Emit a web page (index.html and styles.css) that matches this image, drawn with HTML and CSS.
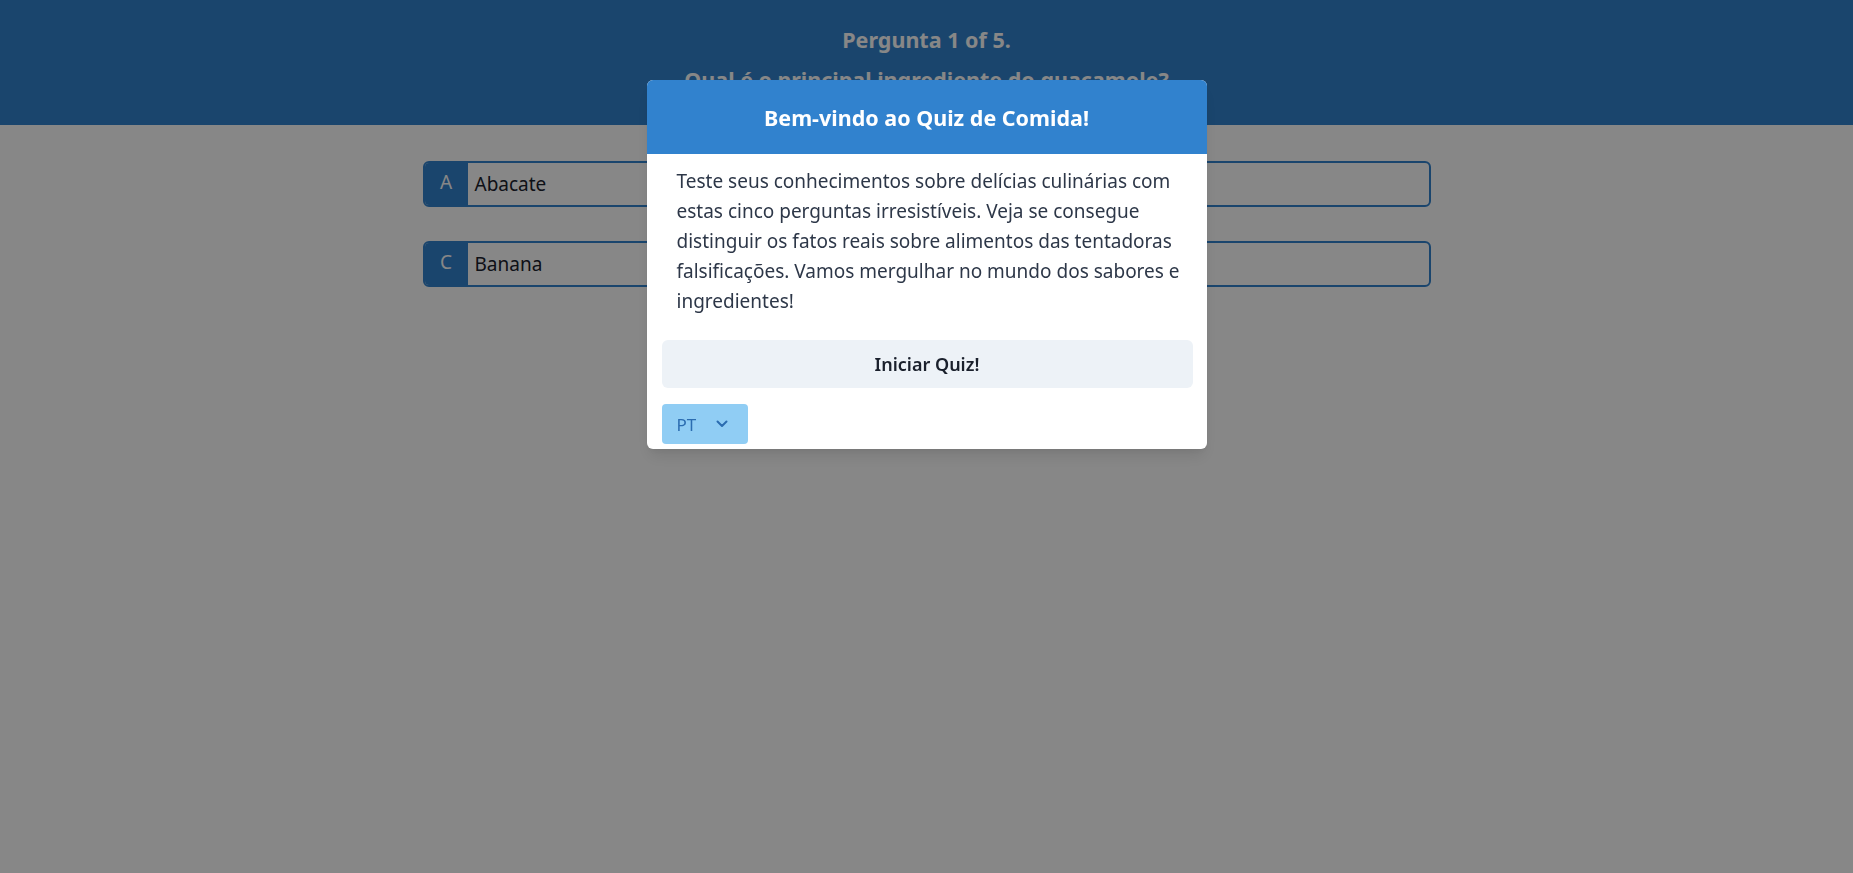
FILE: index.html
```html
<!DOCTYPE html>
<html lang="pt">
<head>
<meta charset="utf-8">
<title>Quiz de Comida</title>
<link rel="stylesheet" href="styles.css">
</head>
<body>
<header class="quiz-header">
  <div class="quiz-count">Pergunta 1 of 5.</div>
  <div class="quiz-question">Qual é o principal ingrediente do guacamole?</div>
</header>
<main class="answers">
  <div class="answer"><span class="answer-letter">A</span><span class="answer-text">Abacate</span></div>
  <div class="answer"><span class="answer-letter">B</span><span class="answer-text">Tomate</span></div>
  <div class="answer"><span class="answer-letter">C</span><span class="answer-text">Banana</span></div>
  <div class="answer"><span class="answer-letter">D</span><span class="answer-text">Cebola</span></div>
</main>
<div class="overlay"></div>
<div class="modal-wrap">
  <section class="modal">
    <h2 class="modal-title">Bem-vindo ao Quiz de Comida!</h2>
    <div class="modal-body">Teste seus conhecimentos sobre delícias culinárias com estas cinco perguntas irresistíveis. Veja se consegue distinguir os fatos reais sobre alimentos das tentadoras falsificações. Vamos mergulhar no mundo dos sabores e ingredientes!</div>
    <div class="modal-actions">
      <button class="start-btn">Iniciar Quiz!</button>
      <div class="lang-select">
        <span>PT</span>
        <svg width="12" height="8" viewBox="0 0 12 8"><path d="M1.5 1.5 L6 6 L10.5 1.5" fill="none" stroke="#2b6cb0" stroke-width="2" stroke-linecap="round" stroke-linejoin="round"/></svg>
      </div>
    </div>
  </section>
</div>
</body>
</html>
```
FILE: styles.css
```css
* { box-sizing: border-box; }
html, body { margin: 0; padding: 0; }
body {
  font-family: "Noto Sans", "Open Sans", sans-serif;
  background: #ffffff;
  color: #1a202c;
  height: 873px;
  overflow: hidden;
}
.quiz-header {
  background: #3182ce;
  color: #ffffff;
  height: 125px;
  padding-top: 20px;
  text-align: center;
  font-weight: 700;
  font-size: 21.5px;
}
.quiz-count, .quiz-question { line-height: 40px; }
.answers {
  width: 1008px;
  margin: 36px auto 0;
  display: grid;
  grid-template-columns: 1fr 1fr;
  column-gap: 16px;
  row-gap: 34px;
}
.answer {
  display: flex;
  height: 46px;
  border: 2px solid #3182ce;
  border-radius: 6px;
  overflow: hidden;
}
.answer-letter {
  width: 43px;
  background: #3182ce;
  color: #ffffff;
  display: flex;
  align-items: center;
  justify-content: center;
  font-size: 19px;
  padding-bottom: 4px;
}
.answer-text {
  display: flex;
  align-items: center;
  padding-left: 7px;
  font-size: 19px;
  color: #1a202c;
}
.overlay {
  position: fixed;
  inset: 0;
  background: rgba(0, 0, 0, 0.47);
}
.modal-wrap {
  position: fixed;
  inset: 0;
  display: flex;
  justify-content: center;
  align-items: flex-start;
  padding-top: 80px;
}
.modal {
  width: 560px;
  background: #ffffff;
  border-radius: 6px;
  overflow: hidden;
  box-shadow: 0 10px 15px -3px rgba(0,0,0,0.1), 0 4px 6px -2px rgba(0,0,0,0.05);
}
.modal-title {
  margin: 0;
  height: 74px;
  background: #3182ce;
  color: #ffffff;
  font-size: 21.5px;
  font-weight: 700;
  display: flex;
  align-items: center;
  justify-content: center;
}
.modal-body {
  padding: 12px 14px 0 30px;
  font-size: 19px;
  line-height: 30px;
  color: #2d3748;
}
.modal-actions {
  padding: 24px 14px 5px 15px;
  display: flex;
  flex-direction: column;
  align-items: flex-start;
  gap: 16px;
}
.start-btn {
  width: 100%;
  height: 48px;
  border: none;
  border-radius: 6px;
  background: #edf2f7;
  color: #1a202c;
  font-family: inherit;
  font-size: 18px;
  font-weight: 600;
}
.lang-select {
  width: 86px;
  height: 40px;
  background: #90cdf4;
  border-radius: 4px;
  display: flex;
  align-items: center;
  justify-content: space-between;
  padding: 0 20px 0 15px;
  color: #2b6cb0;
  font-size: 17px;
}
```
